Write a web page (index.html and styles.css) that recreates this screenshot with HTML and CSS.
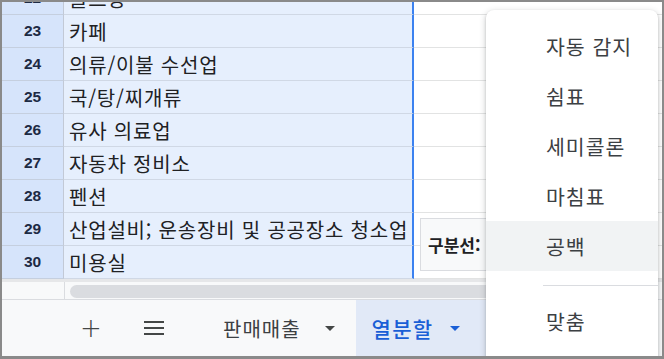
FILE: index.html
```html
<!DOCTYPE html>
<html lang="ko">
<head>
  <meta charset="UTF-8" />
  <title>열분할</title>
  <link rel="stylesheet" href="styles.css">
</head>
<body>
  <div class="sheet">
    <div class="grid">
      <div class="rows">
        <div class="row"><div class="num">22</div><div class="cell-a">골프장</div><div class="cell-b"></div></div>
        <div class="row"><div class="num">23</div><div class="cell-a">카페</div><div class="cell-b"></div></div>
        <div class="row"><div class="num">24</div><div class="cell-a">의류/이불 수선업</div><div class="cell-b"></div></div>
        <div class="row"><div class="num">25</div><div class="cell-a">국/탕/찌개류</div><div class="cell-b"></div></div>
        <div class="row"><div class="num">26</div><div class="cell-a">유사 의료업</div><div class="cell-b"></div></div>
        <div class="row"><div class="num">27</div><div class="cell-a">자동차 정비소</div><div class="cell-b"></div></div>
        <div class="row"><div class="num">28</div><div class="cell-a">펜션</div><div class="cell-b"></div></div>
        <div class="row"><div class="num">29</div><div class="cell-a">산업설비; 운송장비 및 공공장소 청소업</div><div class="cell-b"></div></div>
        <div class="row"><div class="num">30</div><div class="cell-a">미용실</div><div class="cell-b"></div></div>
      </div>
      <div class="scroll-row">
        <div class="scroll-corner"></div>
        <div class="scroll-track"><div class="scroll-thumb"></div></div>
      </div>
    </div>

    <div class="tabs">
      <span class="tab-icon plus">+</span>
      <span class="tab-icon menu-lines">
        <svg width="22" height="16" viewBox="0 0 22 16"><path d="M1 2h20M1 8h20M1 14h20" stroke="#444746" stroke-width="2.2"/></svg>
      </span>
      <div class="tab">판매매출<span class="caret"></span></div>
      <div class="tab active">열분할<span class="caret"></span></div>
    </div>

    <div class="split-chip">구분선:</div>

    <div class="dropdown">
      <div class="item">자동 감지</div>
      <div class="item">쉼표</div>
      <div class="item">세미콜론</div>
      <div class="item">마침표</div>
      <div class="item hover">공백</div>
      <div class="divider"></div>
      <div class="item">맞춤</div>
    </div>
  </div>
</body>
</html>
```

FILE: styles.css
```css
body {
  margin: 0;
  font-family: "Noto Sans CJK KR", "Noto Sans", sans-serif;
  background: #fff;
}
.sheet {
  width: 664px;
  height: 359px;
  box-sizing: border-box;
  border: 2px solid #8a8a8a;
  border-bottom-width: 3px;
  position: relative;
  overflow: hidden;
  background: #fff;
}
.grid {
  height: 298px;
  overflow: hidden;
  border-bottom: 1px solid #dadce0;
  box-sizing: border-box;
}
.rows {
  margin-top: -20px;
}
.row {
  display: flex;
  height: 33px;
}
.num {
  width: 62px;
  box-sizing: border-box;
  background: #d6e4fb;
  border-right: 1px solid #c2c9d6;
  border-bottom: 1px solid #c5cfdf;
  display: flex;
  align-items: center;
  justify-content: center;
  font-family: "Liberation Sans", Arial, sans-serif;
  font-weight: bold;
  font-size: 15.5px;
  color: #1d2a44;
}
.cell-a {
  width: 350px;
  box-sizing: border-box;
  background: #e6effd;
  border-bottom: 1px solid #d0d8e5;
  border-right: 2px solid #3c82f0;
  padding-left: 5px;
  display: flex;
  align-items: center;
  font-size: 20px;
  letter-spacing: 0.8px;
  color: #202124;
  white-space: nowrap;
}
.cell-b {
  flex: 1;
  border-bottom: 1px solid #e2e3e3;
}
.scroll-row {
  display: flex;
  height: 20px;
  border-top: 3px solid #e6e7e9;
  background: #f8f9fa;
}
.scroll-corner {
  width: 62px;
  border-right: 1px solid #dadce0;
}
.scroll-track {
  flex: 1;
  padding: 3px 0 0 5px;
}
.scroll-thumb {
  height: 13px;
  width: 430px;
  background: #dadce0;
  border-radius: 7px;
}
.tabs {
  height: 56px;
  background: #f8f9fa;
  display: flex;
  align-items: center;
}
.tab-icon {
  display: flex;
  align-items: center;
  justify-content: center;
  color: #444746;
}
.plus {
  width: 24px;
  margin-left: 77px;
  font-family: "DejaVu Sans", sans-serif;
  font-size: 26px;
  font-weight: 300;
}
.menu-lines {
  margin-left: 39px;
  width: 24px;
}
.tab {
  height: 100%;
  display: flex;
  align-items: center;
  font-size: 20px;
  letter-spacing: 1px;
  color: #3c4043;
  box-sizing: border-box;
}
.tabs .tab:first-of-type {
  margin-left: 38px;
  padding: 0 21px 0 19px;
}
.caret {
  width: 0;
  height: 0;
  border-left: 5px solid transparent;
  border-right: 5px solid transparent;
  border-top: 5px solid #444746;
  margin-left: 24px;
}
.tab.active {
  background: #e1e9f7;
  color: #1a5fd6;
  font-size: 21px;
  letter-spacing: 1.2px;
  font-weight: 500;
  padding-left: 16px;
  width: 160px;
}
.tab.active .caret {
  border-top-color: #1a5fd6;
  margin-left: 17px;
}
.split-chip {
  position: absolute;
  left: 418px;
  top: 216px;
  width: 90px;
  height: 53px;
  box-sizing: border-box;
  border: 1px solid #dadce0;
  background: #f8f9fa;
  padding-left: 7px;
  display: flex;
  align-items: center;
  font-size: 17px;
  font-weight: bold;
  color: #202124;
}
.dropdown {
  position: absolute;
  left: 484px;
  top: 8px;
  width: 172px;
  height: 420px;
  background: #fff;
  border-radius: 8px;
  box-shadow: 0 2px 6px rgba(60, 64, 67, 0.3), 0 1px 2px rgba(60, 64, 67, 0.2);
  padding-top: 11px;
  box-sizing: border-box;
}
.item {
  height: 50px;
  display: flex;
  align-items: center;
  padding-left: 60px;
  font-size: 20.5px;
  letter-spacing: 1px;
  color: #3c4043;
}
.item.hover {
  background: #f1f3f4;
}
.divider {
  height: 1px;
  background: #dadce0;
  margin: 14px 0 10px 57px;
}
```
